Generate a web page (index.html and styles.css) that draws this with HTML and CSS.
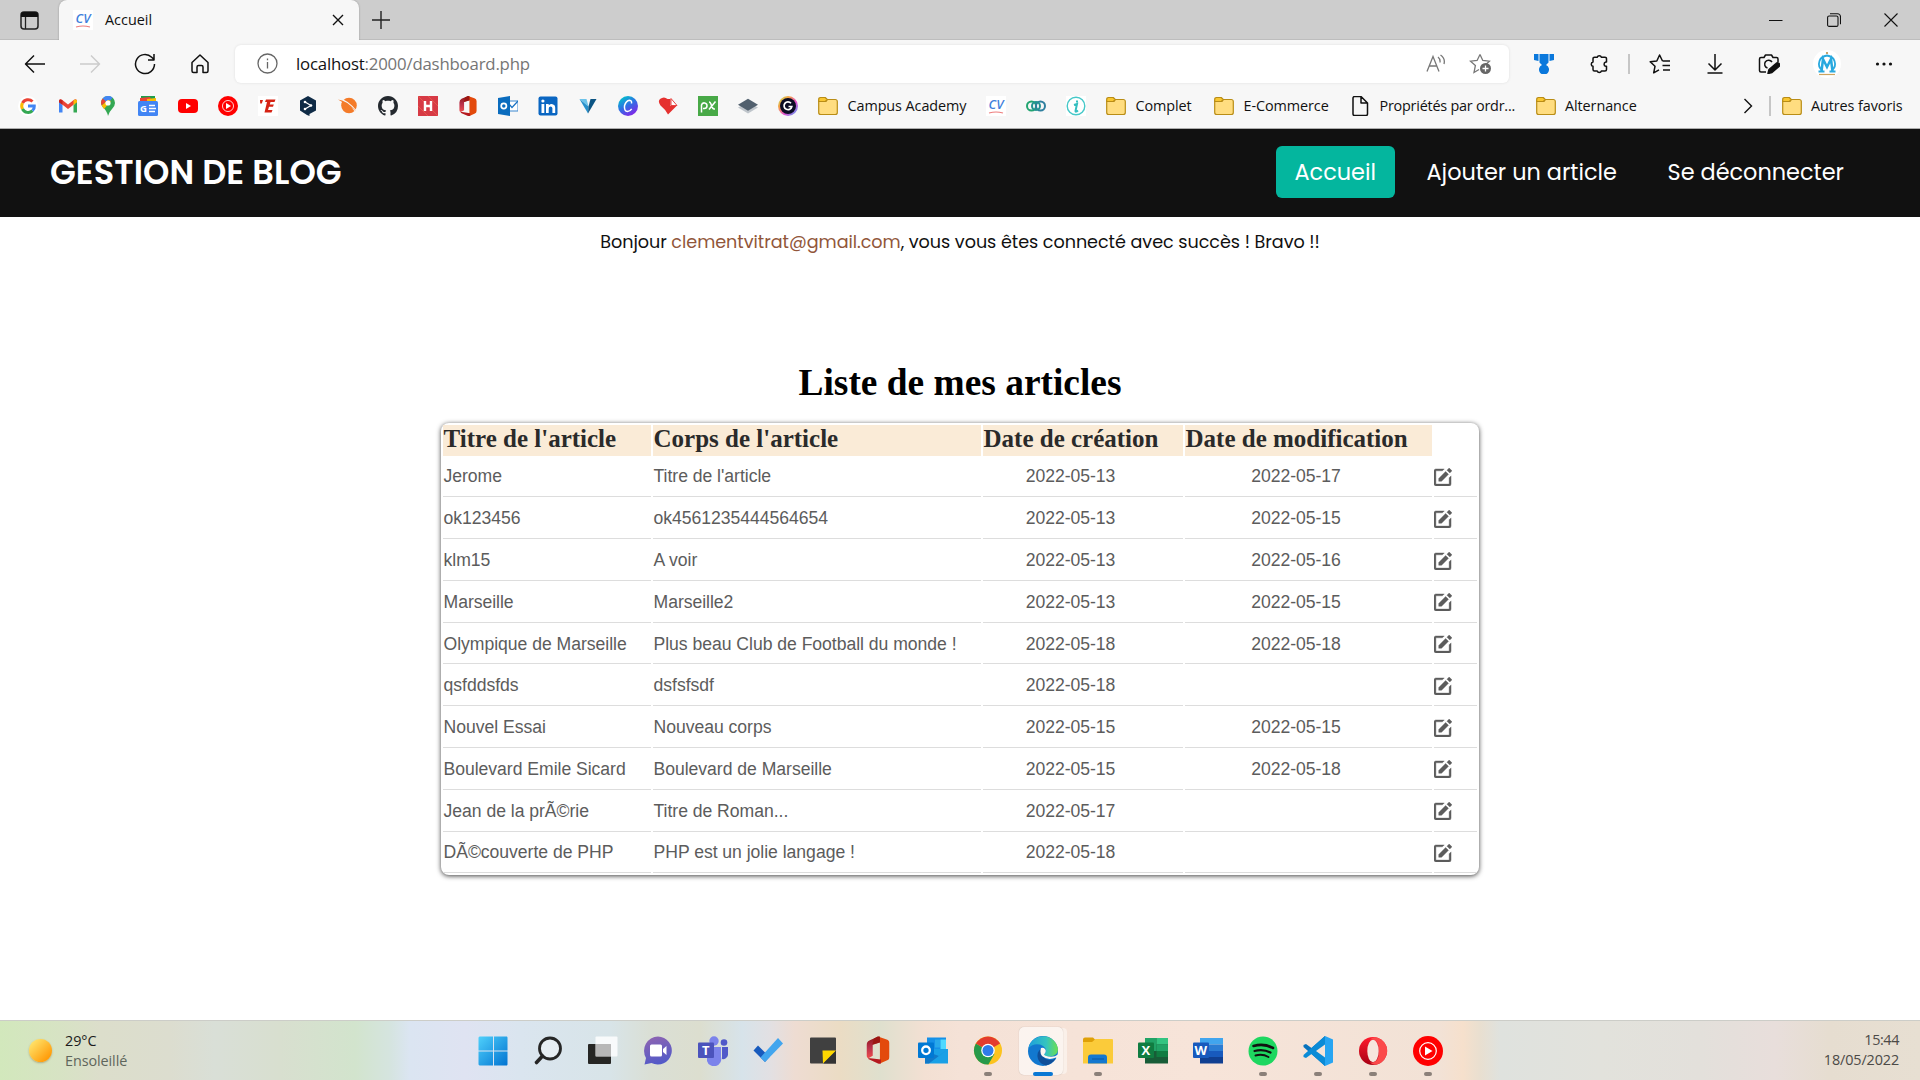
FILE: index.html
```html
<!DOCTYPE html>
<html lang="fr">
<head>
<meta charset="utf-8">
<title>Accueil</title>
<link rel="stylesheet" href="styles.css">
</head>
<body>
<svg class="defs" aria-hidden="true">
  <defs>
    <symbol id="edit" viewBox="3 2 19 19"><path d="m18.988 2.012 3 3L19.701 7.3l-3-3zM8 16h3l7.287-7.287-3-3L8 13z"/><path d="M19 19H8.158c-.026 0-.053.01-.079.01-.033 0-.066-.009-.1-.01H5V5h6.847l2-2H5c-1.103 0-2 .896-2 2v14c0 1.104.897 2 2 2h14a2 2 0 0 0 2-2v-8.668l-2 2V19z"/></symbol>
    <symbol id="folder" viewBox="0 0 20 20"><path d="M.7 5V16.500a2 2 0 0 0 2 2h14.600a2 2 0 0 0 2-2V5.500a2 2 0 0 0-2-2H9.300L8 5.300z" fill="#ffdd80" stroke="#b98d16" stroke-width="1.200"/><path d="M.7 5.500V3.200A1.700 1.700 0 0 1 2.400 1.500h4.800L9.300 3.500 7.300 5.500z" fill="#f8c631" stroke="#b98d16" stroke-width="1.200" stroke-linejoin="round"/></symbol>
    <symbol id="cv" viewBox="0 0 20 20"><rect width="20" height="20" fill="#fff"/><text x="2.500" y="12.500" font-family="Open Sans, sans-serif" font-size="12.500" font-style="italic" font-weight="600" textLength="15" lengthAdjust="spacingAndGlyphs" fill="#3f7fdc">CV</text><path d="M3 17q7-2 14 0" fill="none" stroke="#ee7d7d" stroke-width="1.200"/></symbol>
    <symbol id="ytmusic" viewBox="0 0 30 30"><circle cx="15" cy="15" r="15" fill="#f00"/><circle cx="15" cy="15" r="8.300" fill="none" stroke="#fff" stroke-width="1.200"/><path d="m12 10.500 7.500 4.500-7.500 4.500z" fill="#fff"/></symbol>
    <linearGradient id="officeRed" x1="0" y1="0" x2="0" y2="1"><stop offset="0" stop-color="#8e1515"/><stop offset=".5" stop-color="#b9304a"/><stop offset="1" stop-color="#ee4d4d"/></linearGradient>
    <symbol id="office" viewBox="0 0 24 28"><path d="M12 0 3 4Q0 5.500 0 9v11q0 2 2 2.500l4.500-2.500V8.500L15 6z" fill="url(#officeRed)"/><path d="m12 0 9 3q3 1 3 4v14q0 3-3 4l-7 3V6z" fill="#e34a0c"/><path d="M14 6V0h-2L8 2 6 8.500z" fill="#9b1612"/><path d="M4 22.500 15 24v4q-1.500.500-3 0L3 24q-2-.8-1-1.500z" fill="#b5191f"/></symbol>
  </defs>
</svg>

<header class="browser">
  <div class="tabstrip">
    <div class="tabactions"><svg width="19" height="19" viewBox="0 0 19 19"><rect x="1" y="1" width="17" height="17" rx="3" fill="none" stroke="#222" stroke-width="1.500"/><path d="M1 6V4a3 3 0 0 1 3-3h11a3 3 0 0 1 3 3v2z" fill="#111"/><path d="M5.500 6v12" stroke="#222" stroke-width="1.300"/></svg></div>
    <div class="tab">
      <svg width="20" height="20"><use href="#cv"/></svg>
      <span class="tabtitle">Accueil</span>
      <svg class="tabclose" width="12" height="12" viewBox="0 0 12 12"><path d="m1 1 10 10M11 1 1 11" stroke="#111" stroke-width="1.400"/></svg>
    </div>
    <svg class="newtab" width="18" height="18" viewBox="0 0 18 18"><path d="M9 0v18M0 9h18" stroke="#222" stroke-width="1.400"/></svg>
    <div class="winbtns">
      <svg width="14" height="14" viewBox="0 0 14 14"><path d="M0 7.500h13.500" stroke="#111"/></svg>
      <svg width="14" height="14" viewBox="0 0 14 14"><rect x=".6" y="3" width="10.400" height="10.400" rx="1.500" fill="none" stroke="#111" stroke-width="1.100"/><path d="M3 .8h7.500a3 3 0 0 1 3 3v7.500" fill="none" stroke="#111" stroke-width="1.100"/></svg>
      <svg width="14" height="14" viewBox="0 0 14 14"><path d="m.5.500 13 13M13.500.500l-13 13" stroke="#111" stroke-width="1.100"/></svg>
    </div>
  </div>

  <div class="toolbar">
    <div class="navbtns">
      <svg width="22" height="20" viewBox="0 0 22 20" class="ln"><path d="M21 10H1.500M10 1.500 1.500 10l8.500 8.500"/></svg>
      <svg width="22" height="20" viewBox="0 0 22 20" class="ln off"><path d="M1 10h19.500M12 1.500l8.500 8.500-8.500 8.500"/></svg>
      <svg width="22" height="22" viewBox="0 0 22 22" class="ln"><path d="M20.500 11A9.500 9.500 0 1 1 17.700 4.300L20 6.500M20 1v6h-6"/></svg>
      <svg width="20" height="20" viewBox="0 0 20 20" class="ln"><path d="M2 8.500 10 1l8 7.500V17a1.500 1.500 0 0 1-1.500 1.500H13V13a1.500 1.500 0 0 0-1.500-1.500h-3A1.500 1.500 0 0 0 7 13v5.500H3.500A1.500 1.500 0 0 1 2 17z"/></svg>
    </div>
    <div class="urlbar">
      <svg width="21" height="21" viewBox="0 0 21 21" fill="none" stroke="#666" stroke-width="1.300"><circle cx="10.500" cy="10.500" r="9.500"/><path d="M10.500 9v6.500M10.500 5.500v1.700"/></svg>
      <span class="url">localhost<i>:2000/dashboard.php</i></span>
      <svg class="read" width="20" height="19" viewBox="0 0 20 19" fill="none" stroke="#777" stroke-width="1.300"><path d="m1 17.500 6-15 6 15M3 12h8M12 3q2.500 2 2 5.500M14.500 1q5 3.500 3.500 9"/></svg>
      <svg width="23" height="22" viewBox="0 0 23 22" fill="none" stroke="#777" stroke-width="1.300"><path d="m11 1.500 2.800 6 6.600.7-4.900 4.500M10 16.500l-5 3 1.400-7L1.500 8.200l6.600-.7L11 1.500"/><circle cx="16.500" cy="15.500" r="5.500" fill="#666" stroke="none"/><path d="M16.500 12.500v6M13.500 15.500h6" stroke="#fff"/></svg>
    </div>
    <div class="tools">
      <svg width="20" height="20" viewBox="0 0 20 20" fill="#0a78dc"><path d="M0 0h4.500v7L0 6zM15.500 0H20v6l-4.500 1zM5.500 0h9v8.500L12 11a5 5 0 1 1-4 0L5.500 8.500z"/></svg>
      <svg width="20" height="20" viewBox="0 0 20 20" class="ln"><path d="M6 3.200h2.200a2.200 2.200 0 0 1 4.200 0H16a1.500 1.500 0 0 1 1.500 1.500V8h-.7a2.200 2.200 0 0 0 0 4.300h.7v3.200A1.500 1.500 0 0 1 16 17h-3.600a2.200 2.200 0 0 1-4.200 0H5.500A1.500 1.500 0 0 1 4 15.500v-3.200a2.200 2.200 0 0 1 0-4.300V4.700A1.500 1.500 0 0 1 5.500 3.200z"/></svg>
      <span class="sep"></span>
      <svg width="22" height="20" viewBox="0 0 22 20" class="ln"><path d="M13.500 7 10.600 1 7.800 7 1.200 7.800 6 12.300l-1.300 6.500 5.300-3M13.500 7H21M13.500 11.500H21M14 16h7"/></svg>
      <svg width="18" height="20" viewBox="0 0 18 20" class="ln"><path d="M9 0v16M2.500 9.500 9 16l6.500-6.500M1.500 19h15"/></svg>
      <svg width="22" height="20" viewBox="0 0 22 20" class="ln"><path d="M20 8V5a1.500 1.500 0 0 0-1.500-1.500H15L13.500 1h-6L6 3.500H3A1.500 1.500 0 0 0 1.500 5v11.500A1.500 1.500 0 0 0 3 18h5M14 8a4 4 0 1 0-4.500 6"/><path d="m10 19.500 1-4 7-6a2 2 0 0 1 3 3l-7 6z" fill="#111"/></svg>
      <svg class="avatar" width="28" height="28" viewBox="0 0 28 28"><circle cx="14" cy="14" r="14" fill="#fff"/><circle cx="14" cy="3" r="1.100" fill="#ba8c4b"/><g fill="none" stroke="#29a9df"><path d="M8.500 21.500 10 9l4 8 4-8 1.500 12.500" stroke-width="2.500"/><path d="M9.500 20.500Q4.500 17 6.500 11 8 6.500 14 5.500q6 1 7.500 5.500 2 6-3 9.500" stroke-width="1.800"/><path d="M5.500 21.500h6M16.500 21.500h6" stroke-width="2"/></g><path d="M6 24.500h16" stroke="#cda45e" stroke-width="1.200"/></svg>
      <svg width="18" height="6" viewBox="0 0 18 6" fill="#111"><circle cx="2.500" cy="3" r="1.600"/><circle cx="9" cy="3" r="1.600"/><circle cx="15.500" cy="3" r="1.600"/></svg>
    </div>
  </div>

  <div class="bookmarks">
    <svg width="20" height="20" viewBox="0 0 20 20"><circle cx="10" cy="10" r="10" fill="#fff"/><g fill="none" stroke-width="3"><path d="M14.500 5.500A6.300 6.300 0 0 0 4.500 7" stroke="#ea4335"/><path d="M4.500 7a6.300 6.300 0 0 0 0 6" stroke="#fbbc05"/><path d="M4.500 13a6.300 6.300 0 0 0 10 1.700" stroke="#34a853"/><path d="M14.500 14.700Q16.500 13 16.300 10H10" stroke="#4285f4"/></g></svg>
    <svg width="20" height="20" viewBox="0 0 20 20"><path d="M1 4.500V16.500h3.500v-7z" fill="#4285f4"/><path d="M19 4.500v12h-3.500v-7z" fill="#34a853"/><path d="M1 6V4.500Q2 2.500 4 3.800L10 8.500l6-4.700Q18 2.500 19 4.500V6l-9 7z" fill="#ea4335"/><path d="M15.500 4.200V9L19 6.300V5Q18.500 2.500 15.500 4.200z" fill="#fbbc04"/><path d="M4.500 4.200V9L1 6.300V5Q1.500 2.500 4.500 4.200z" fill="#c5221f"/></svg>
    <svg width="20" height="20" viewBox="0 0 20 20"><path d="M10 20Q9 15 5 11.500 3 9 3 7a7 7 0 0 1 14 0q0 3-3 6t-4 7z" fill="#34a853"/><path d="M4.500 2.700 10 8l4.500-6.500A7 7 0 0 0 4.500 2.700z" fill="#4285f4"/><path d="M4.500 2.500A7 7 0 0 0 3.700 9.500L8 5.500z" fill="#ea4335"/><path d="M3.700 9.500 6 13l7-8-3-1z" fill="#fbbc04"/><circle cx="10" cy="7" r="2.600" fill="#fff"/></svg>
    <svg width="20" height="20" viewBox="0 0 20 20"><path d="M3 0h14v6H3z" fill="#1e9e4b"/><path d="m2 2 10-1 3 6H2z" fill="#ea4335"/><path d="m9 3 9-1v6H9z" fill="#fbbc04"/><rect y="5" width="20" height="15" rx="1.500" fill="#4285f4"/><text x="2" y="16" font-family="Open Sans" font-size="9.500" font-weight="700" fill="#fff">G</text><path d="M11 9.500h6M11 12.500h7M11 15.500h6" stroke="#fff" stroke-width="1.500"/></svg>
    <svg width="20" height="20" viewBox="0 0 20 20"><rect y="3" width="20" height="14" rx="4" fill="#f00"/><path d="m8 7 5 3-5 3z" fill="#fff"/></svg>
    <svg width="20" height="20"><use href="#ytmusic"/></svg>
    <svg width="20" height="20" viewBox="0 0 20 20"><rect width="20" height="20" fill="#fff"/><path d="M2 4h3L3.800 7.500H2.200zM8 3.500h9.500L16.500 6h-4l-.7 2.500h4l-.8 2.300h-4L10 14h4.500l-1 2.500H6.500L9 6H7z" fill="#d62213"/></svg>
    <svg width="20" height="20" viewBox="0 0 20 20"><path d="m10 0 8 4.500v10L11.500 18v2L9 19 2 14.500v-10z" fill="#0f2b46"/><path d="m7 6 6 3.500-6 3.500" fill="none" stroke="#fff" stroke-width="1.200"/><g fill="#fff"><circle cx="7" cy="6" r="1.300"/><circle cx="13" cy="9.500" r="1.300"/><circle cx="7" cy="13" r="1.300"/></g></svg>
    <svg width="20" height="20" viewBox="0 0 20 20"><circle cx="11" cy="9.500" r="7.800" fill="#f47b29"/><path d="M0 3q9 1 19 13.500" fill="none" stroke="#f7f7f7" stroke-width="2"/><path d="M0 3.500Q8 4 18 15 8 8 0 3.500z" fill="#f47b29"/></svg>
    <svg width="20" height="20" viewBox="0 0 16 16" fill="#24292f"><path d="M8 0C3.580 0 0 3.580 0 8c0 3.540 2.290 6.530 5.470 7.590.4.070.55-.17.55-.38 0-.19-.01-.82-.01-1.490-2.010.37-2.530-.49-2.690-.94-.09-.23-.48-.94-.82-1.130-.28-.15-.68-.52-.01-.53.63-.01 1.080.58 1.230.82.72 1.210 1.870.87 2.330.66.07-.52.280-.87.510-1.070-1.780-.2-3.640-.89-3.640-3.950 0-.87.310-1.590.82-2.150-.08-.2-.36-1.020.08-2.120 0 0 .67-.21 2.200.82.640-.18 1.320-.27 2-.27s1.360.09 2 .27c1.530-1.040 2.200-.82 2.200-.82.440 1.100.16 1.920.08 2.120.51.56.82 1.270.82 2.150 0 3.070-1.870 3.750-3.650 3.950.29.25.54.73.54 1.480 0 1.070-.01 1.930-.01 2.200 0 .21.15.46.55.38A8.010 8.010 0 0 0 16 8c0-4.420-3.580-8-8-8z"/></svg>
    <svg width="20" height="20" viewBox="0 0 20 20"><rect width="20" height="20" fill="#d73a45"/><path d="m0 10 10 10M0 0l20 20M10 0l10 10" stroke="#e4574b"/><path d="M7 5v10M13 5v10M7 10h6" stroke="#fff" stroke-width="2.400"/></svg>
    <svg width="20" height="20"><use href="#office"/></svg>
    <svg width="20" height="20" viewBox="0 0 20 20"><path d="M9 5h11v10H9z" fill="#fff" stroke="#3a87cf"/><path d="m11 8 3 3.500L20 5" fill="none" stroke="#1a73c4" stroke-width="1.200"/><path d="m0 2 12-2v20L0 18z" fill="#0a6cbe"/><circle cx="5.800" cy="10" r="2.600" fill="none" stroke="#fff" stroke-width="1.700"/></svg>
    <svg width="20" height="20" viewBox="0 0 20 20"><rect x=".5" y=".5" width="19" height="19" rx="2" fill="#0a66c2"/><path d="M3.500 8h2.800v9H3.500zM8 8h2.700v1.200q3.200-2.700 6 .3.500 1 .5 2.500v5h-2.800v-5q-.8-2.500-3.200-1-.5 1-.5 2v4H8z" fill="#fff"/><circle cx="4.900" cy="5" r="1.600" fill="#fff"/></svg>
    <svg width="20" height="20" viewBox="0 0 20 20"><path d="M1.500 3h7l2 7.500z" fill="#6cc3ea"/><path d="M1.500 3 10 17.500l.500-7z" fill="#2790cb"/><path d="M18.500 3h-6l-2 7.500-.5 7z" fill="#0b5483"/></svg>
    <svg width="20" height="20" viewBox="0 0 20 20"><defs><linearGradient id="canva" x1="0" y1="0" x2=".6" y2="1"><stop offset=".1" stop-color="#00c4cc"/><stop offset=".55" stop-color="#2f6fe4"/><stop offset="1" stop-color="#7d2ae8"/></linearGradient></defs><circle cx="10" cy="10" r="10" fill="url(#canva)"/><path d="M13.500 7.500q.5-3-2-3.200-3.500.5-5 5.500-.5 5.500 3 5.700 2.500-.2 4.200-2.700" fill="none" stroke="#fff" stroke-width="1.500"/></svg>
    <svg width="20" height="20" viewBox="0 0 20 20"><path d="M10 18.500Q8 14 2.500 9.500-.5 5.500 2 3 6-.2 9.500 3l3 0v7h6L15 13.500z" fill="#e5312f"/><path d="m13 2.500 6 7h-6z" fill="#fff" stroke="#e5312f" stroke-width=".9"/></svg>
    <svg width="20" height="20" viewBox="0 0 20 20"><rect width="20" height="20" fill="#48a947"/><path d="M3.500 16.500V9a2.800 2.800 0 1 1 2.800 3.500H5M11 6q1.500 0 2.500 3.500T16 13h1M17.500 5.500 11 13.500" fill="none" stroke="#fff" stroke-width="1.500"/></svg>
    <svg width="20" height="20" viewBox="0 0 20 20"><path d="m0 11.500 10-5 10 5-10 6z" fill="#bfc5cb"/><path d="m0 8.800 10-6 10 6-10 6z" fill="#51606e"/></svg>
    <svg width="20" height="20" viewBox="0 0 20 20"><defs><linearGradient id="ring" x1="0" y1="0" x2="1" y2="1"><stop offset="0" stop-color="#b9ea63"/><stop offset=".3" stop-color="#f5a046"/><stop offset=".6" stop-color="#e54fcf"/><stop offset="1" stop-color="#3fa8f6"/></linearGradient></defs><circle cx="10" cy="10" r="10" fill="url(#ring)"/><circle cx="10" cy="10" r="8" fill="#0a0c24"/><path d="M13 7.300A3.900 3.900 0 1 0 13.800 10.500H10.500" fill="none" stroke="#fff" stroke-width="1.700"/></svg>
    <div class="bm"><svg width="20" height="20"><use href="#folder"/></svg><span class="w118">Campus Academy</span></div>
    <svg width="20" height="20"><use href="#cv"/></svg>
    <svg width="20" height="20" viewBox="0 0 20 20" fill="none" stroke-width="2"><rect x="1" y="5.500" width="9" height="9" rx="4.500" stroke="#23a571"/><rect x="10" y="5.500" width="9" height="9" rx="4.500" stroke="#2f7f9f"/><circle cx="10" cy="10" r="4" stroke="#239391"/></svg>
    <svg width="20" height="20" viewBox="0 0 20 20"><rect width="20" height="20" fill="#fff"/><circle cx="10" cy="10" r="8.800" fill="none" stroke="#45c8c8" stroke-width="1.400"/><path d="M11 4.500v2M8 9l3-1-1.500 7q0 1.500 2.500-.5" fill="none" stroke="#35bfc0" stroke-width="2"/></svg>
    <div class="bm"><svg width="20" height="20"><use href="#folder"/></svg><span class="w58">Complet</span></div>
    <div class="bm"><svg width="20" height="20"><use href="#folder"/></svg><span class="w86">E-Commerce</span></div>
    <div class="bm"><svg width="20" height="20" viewBox="0 0 20 20" class="ln"><path d="M3 2a1.500 1.500 0 0 1 1.500-1.500H11L17.500 7v11a1.500 1.500 0 0 1-1.500 1.500H4.500A1.500 1.500 0 0 1 3 18zM11 .5V7h6.500"/></svg><span class="w136">Propriétés par ordr...</span></div>
    <div class="bm"><svg width="20" height="20"><use href="#folder"/></svg><span class="w71">Alternance</span></div>
    <svg class="more" width="10" height="16" viewBox="0 0 10 16"><path d="m1.500 1 7 7-7 7" fill="none" stroke="#111" stroke-width="1.400"/></svg>
    <span class="sep"></span>
    <div class="bm other"><svg width="20" height="20"><use href="#folder"/></svg><span class="w91">Autres favoris</span></div>
  </div>
</header>

<main class="page">
  <nav class="sitenav">
    <div class="brand">GESTION DE BLOG</div>
    <div class="links"><a class="current">Accueil</a><a class="add">Ajouter un article</a><a class="logout">Se déconnecter</a></div>
  </nav>
  <p class="hello">Bonjour <span>clementvitrat@gmail.com</span>, vous vous êtes connecté avec succès ! Bravo !!</p>
  <h1>Liste de mes articles</h1>
  <table>
    <colgroup><col class="c1"><col class="c2"><col class="c3"><col class="c4"><col class="c5"></colgroup>
    <thead><tr><th>Titre de l'article</th><th>Corps de l'article</th><th>Date de création</th><th>Date de modification</th></tr></thead>
    <tbody>
      <tr><td>Jerome</td><td>Titre de l'article</td><td>2022-05-13</td><td>2022-05-17</td><td><svg class="edit"><use href="#edit"/></svg></td></tr>
      <tr><td>ok123456</td><td>ok4561235444564654</td><td>2022-05-13</td><td>2022-05-15</td><td><svg class="edit"><use href="#edit"/></svg></td></tr>
      <tr><td>klm15</td><td>A voir</td><td>2022-05-13</td><td>2022-05-16</td><td><svg class="edit"><use href="#edit"/></svg></td></tr>
      <tr><td>Marseille</td><td>Marseille2</td><td>2022-05-13</td><td>2022-05-15</td><td><svg class="edit"><use href="#edit"/></svg></td></tr>
      <tr><td>Olympique de Marseille</td><td>Plus beau Club de Football du monde !</td><td>2022-05-18</td><td>2022-05-18</td><td><svg class="edit"><use href="#edit"/></svg></td></tr>
      <tr><td>qsfddsfds</td><td>dsfsfsdf</td><td>2022-05-18</td><td></td><td><svg class="edit"><use href="#edit"/></svg></td></tr>
      <tr><td>Nouvel Essai</td><td>Nouveau corps</td><td>2022-05-15</td><td>2022-05-15</td><td><svg class="edit"><use href="#edit"/></svg></td></tr>
      <tr><td>Boulevard Emile Sicard</td><td>Boulevard de Marseille</td><td>2022-05-15</td><td>2022-05-18</td><td><svg class="edit"><use href="#edit"/></svg></td></tr>
      <tr><td>Jean de la prÃ©rie</td><td>Titre de Roman...</td><td>2022-05-17</td><td></td><td><svg class="edit"><use href="#edit"/></svg></td></tr>
      <tr><td>DÃ©couverte de PHP</td><td>PHP est un jolie langage !</td><td>2022-05-18</td><td></td><td><svg class="edit"><use href="#edit"/></svg></td></tr>
    </tbody>
  </table>
</main>

<footer class="taskbar">
  <div class="weather"><span class="sun"></span><div><b>29°C</b><span>Ensoleillé</span></div></div>
  <div class="apps">
    <div class="app"><svg viewBox="0 0 30 30"><defs><linearGradient id="win" x1="0" y1="0" x2="1" y2="1"><stop stop-color="#4fd0fb"/><stop offset="1" stop-color="#0173d1"/></linearGradient></defs><path d="M1.500.500H15V14.500H.5V1.500zM16 .5h13l.5 1v13H16zM.5 15.500H15v14H1.500l-1-1zM16 15.500h13.500v13l-.5 1H16z" fill="url(#win)"/></svg></div>
    <div class="app"><svg viewBox="0 0 30 30"><circle cx="17" cy="12.500" r="10.500" fill="#fff" fill-opacity=".35" stroke="#262626" stroke-width="2.800"/><path d="M9.500 20 3.500 26.500" stroke="#262626" stroke-width="3.600" stroke-linecap="round"/></svg></div>
    <div class="app"><svg viewBox="0 0 30 30"><rect x="0" y="8" width="23" height="20" rx="1" fill="#262624"/><rect x="7.500" y=".5" width="22" height="20" rx="1" fill="#fff" fill-opacity=".82"/><rect x="7.500" y="8" width="15.500" height="12.500" fill="#aaa" fill-opacity=".7"/></svg></div>
    <div class="app"><svg viewBox="0 0 30 30"><defs><linearGradient id="chat" x1=".3" y1="0" x2=".6" y2="1"><stop stop-color="#8d64b2"/><stop offset="1" stop-color="#5059c9"/></linearGradient></defs><path d="M15 .5A14 14 0 1 1 8.500 27L1.500 28.500 3 22A14.300 14.300 0 0 1 15 .5z" fill="url(#chat)"/><rect x="7" y="8.500" width="12" height="12" rx="1.500" fill="#fff"/><path d="m20 13 3.500-3v9L20 16z" fill="#fff"/></svg></div>
    <div class="app"><svg viewBox="0 0 30 30"><circle cx="16" cy="5" r="4.700" fill="#7b83eb"/><circle cx="26" cy="6.500" r="3.300" fill="#5059c9"/><path d="M9 11h14v10a7 7 0 0 1-14 4z" fill="#7b83eb"/><path d="M24 11h6v8a5 5 0 0 1-6 4z" fill="#5059c9"/><rect y="6.500" width="16" height="15.500" rx="1" fill="#4b53bc"/><text x="4" y="19" font-family="Open Sans" font-weight="700" font-size="13" fill="#fff">T</text></svg></div>
    <div class="app"><svg viewBox="0 0 30 30"><path d="M5 9.500 16.500 21 12 26 .5 14.500z" fill="#185abd"/><path d="M7.500 21.500 25 2l5 5.500L12 26z" fill="#41a5ee"/></svg></div>
    <div class="app"><svg viewBox="0 0 30 30"><path d="M3 1.500h24a1 1 0 0 1 1 1v25H3a1 1 0 0 1-1-1v-24a1 1 0 0 1 1-1z" fill="#404040"/><path d="M14.500 14.500H28L15 27.500z" fill="#ffd800"/><path d="m28 15-12.500 12.500H28z" fill="#333"/></svg></div>
    <div class="app"><svg viewBox="0 0 30 30"><use href="#office" x="3.500" y="0" width="23" height="28"/></svg></div>
    <div class="app"><svg viewBox="0 0 30 30"><path d="M9 1.500h19v14H9z" fill="#1590e8"/><path d="M17 3.500h5.500v8H17z" fill="#28a8ea"/><path d="M22.500 3.500H28V13h-5.500z" fill="#50d9ff"/><path d="M7 13h23v14.500H7z" fill="#1aa0e6"/><path d="m30 13-9 7-14-5v12.500h4z" fill="#1179c9"/><rect y="6.500" width="16" height="15.500" rx="1" fill="#0078d4"/><circle cx="8" cy="14.300" r="3.800" fill="none" stroke="#fff" stroke-width="2.300"/></svg></div>
    <div class="app run"><svg viewBox="0 0 30 30"><circle cx="15" cy="14.500" r="14" fill="#fcc31e"/><path d="M15 14.500 2.900 7.500a14 14 0 0 0 12.500 21l6-10.500z" fill="#27994a"/><path d="M15 14.500 2.900 7.500a14 14 0 0 1 24.200 0z" fill="#e33b2e"/><circle cx="15" cy="14.500" r="6.800" fill="#fff"/><circle cx="15" cy="14.500" r="5.500" fill="#2f7bea"/></svg></div>
    <div class="app run active"><svg viewBox="0 0 30 30"><defs><linearGradient id="edgeTop"><stop stop-color="#1d9fdc"/><stop offset=".6" stop-color="#35c3c0"/><stop offset="1" stop-color="#6be04f"/></linearGradient></defs><circle cx="15" cy="15" r="15" fill="#1278cf"/><path d="M.5 12A15 15 0 0 1 30 13q0 7-8 7.500-5 0-6-2 2.500-2 2-4.500-1-4-6-5.500Q5 7 .5 12z" fill="url(#edgeTop)"/><path d="M13 13q-5 3-3 10 2 5 8 6.500 6-1.500 10-7-3 1.500-7 1.500-9-2-8-11z" fill="#104f99"/><path d="M13 12q-1.500 5 1 8 6 5 14 1.500l2.500 1.500V18q-3 3-8 2.800-5-.3-6.500-2.300 3-3 1-5.500-1.500-2-4-1z" fill="#fdf6f0"/></svg></div>
    <div class="app run"><svg viewBox="0 0 30 30"><path d="M0 3.500a2 2 0 0 1 2-2h8L12.500 4v5H0z" fill="#dfa008"/><path d="M0 6h9l3.500-3H29a1 1 0 0 1 1 1v23.500H0z" fill="#fbcb3a"/><path d="M5 27.500v-6a3 3 0 0 1 3-3h13a3 3 0 0 1 3 3v6z" fill="#1478cf"/><path d="M9 23h12" stroke="#0b569f"/></svg></div>
    <div class="app"><svg viewBox="0 0 30 30"><path d="M7 2h23v25.500H7z" fill="#185c37"/><path d="M7 2h11.500v13H7z" fill="#21a366"/><path d="M18.500 2H30v6.500H18.500z" fill="#33c481"/><path d="M18.500 8.500H30V15H18.500z" fill="#21a366"/><path d="M18.500 15H30v6H18.500z" fill="#107c41"/><rect y="6.500" width="16" height="15.500" rx="1" fill="#107c41"/><text x="3.500" y="19" font-family="Open Sans" font-weight="700" font-size="13" fill="#fff">X</text></svg></div>
    <div class="app"><svg viewBox="0 0 30 30"><path d="M7 2h23v6.500H7z" fill="#41a5ee"/><path d="M7 8.500h23V15H7z" fill="#2b7cd3"/><path d="M7 15h23v6H7z" fill="#185abd"/><path d="M7 21h23v6.500H7z" fill="#103f91"/><rect y="6.500" width="16" height="15.500" rx="1" fill="#185abd"/><text x="1.500" y="19" font-family="Open Sans" font-weight="700" font-size="13" fill="#fff">W</text></svg></div>
    <div class="app run"><svg viewBox="0 0 30 30"><circle cx="15" cy="15" r="14.500" fill="#1ed760"/><path d="M5.500 10q10.500-3 19.500 2" fill="none" stroke="#111" stroke-width="2.600" stroke-linecap="round"/><path d="M6.500 15q8.500-2.500 16 1.500" fill="none" stroke="#111" stroke-width="2.200" stroke-linecap="round"/><path d="M7.500 19.500q7-2 13 1.500" fill="none" stroke="#111" stroke-width="1.900" stroke-linecap="round"/></svg></div>
    <div class="app run"><svg viewBox="0 0 30 30"><path d="M22 0 8.500 12 3 8 .5 9v2L22 30z" fill="#0672bd"/><path d="M22 30 8.500 18 3 22 .5 21v-2L22 0z" fill="#0b8bd6"/><path d="m22 0 8 3.500v23L22 30z" fill="#27a5f2"/><path d="m22 8.500-9 6.500 9 6.500z" fill="#f5e4d9"/></svg></div>
    <div class="app run"><svg viewBox="0 0 30 30"><defs><linearGradient id="opera" x1="0" y1="0" x2="0" y2="1"><stop stop-color="#ff1b2d"/><stop offset="1" stop-color="#a70014"/></linearGradient></defs><circle cx="15" cy="15" r="14" fill="url(#opera)"/><path d="M19 1.500a14 14 0 0 1 0 27q-4 1-7-2h3q6-1 6-11.500T15 3.500h-3q3-3 7-2z" fill="#fb4a4a"/><ellipse cx="15" cy="15" rx="5.700" ry="11.300" fill="#f6e6dc"/></svg></div>
    <div class="app run"><svg viewBox="0 0 30 30"><use href="#ytmusic" width="30" height="30"/></svg></div>
  </div>
  <div class="clock"><span>15:44</span><span>18/05/2022</span></div>
</footer>
</body>
</html>
```
FILE: styles.css
```css
* { box-sizing: border-box; }
body { margin: 0; width: 1920px; height: 1080px; overflow: hidden; background: #fff; display: flex; flex-direction: column; font-family: "Open Sans", sans-serif; }
svg { display: block; flex: none; }
.defs { position: absolute; width: 0; height: 0; }
.ln { fill: none; stroke: #111; stroke-width: 1.5; stroke-linejoin: round; }
.ln.off { stroke: #ccc; }
.sep { width: 2px; height: 20px; background: #c6c6c6; }

/* Browser chrome */
.browser { height: 129px; background: #f7f7f7; border-bottom: 1px solid #adadad; flex: none; }
.tabstrip { height: 40px; background: #cdcdcd; display: flex; align-items: center; box-shadow: inset 0 -1px #bdbdbd; }
.tabactions { width: 59px; height: 40px; display: flex; align-items: center; justify-content: center; }
.tab { width: 300px; height: 40px; background: #f7f7f7; border-radius: 8px 8px 0 0; display: flex; align-items: center; padding: 0 15px 0 14px; box-shadow: 0 0 2px rgba(0,0,0,.3); clip-path: inset(0 -3px); }
.tab > svg:first-child { margin-bottom: 1px; }
.tabtitle { font-size: 14.4px; margin-left: 12px; flex: 1; color: #111; padding-bottom: 2px; }
.newtab { margin-left: 13px; margin-bottom: 1px; }
.winbtns { margin-left: auto; display: flex; gap: 43.5px; padding: 0 22px 1px 0; }
.toolbar { height: 47px; display: flex; align-items: center; }
.navbtns { width: 235px; padding: 0 8px 0 7px; display: grid; grid-template-columns: repeat(4, 55px); justify-items: center; align-items: center; }
.urlbar { width: 1274px; height: 38px; background: #fff; border-radius: 6px; box-shadow: 0 0 3px rgba(0,0,0,.1); display: flex; align-items: center; padding: 0 17px 0 22px; }
.url { font-size: 16.8px; letter-spacing: -.19px; margin-left: 18px; color: #111; padding-bottom: 1px; }
.url i { font-style: normal; color: #757575; }
.read { margin-left: auto; margin-right: 23px; }
.tools { width: 411px; padding-left: 7px; display: grid; grid-template-columns: 55px 56px 4px 58px 52px 56px 60px 54px; justify-items: center; align-items: center; }
.bookmarks { height: 38px; padding: 0 18px; display: flex; align-items: center; gap: 20px; font-size: 14.4px; color: #111; white-space: nowrap; }
.bm { display: flex; align-items: center; gap: 9.5px; }
.bm span { letter-spacing: -.08px; padding-bottom: 1px; }
.w118 { width: 118.5px; }
.w58 { width: 58.5px; }
.w86 { width: 86.5px; }
.w136 { width: 136px; }
.bookmarks .w136 { letter-spacing: -.22px; }
.w71 { width: 71px; }
.w91 { width: 91px; }
.more { margin-left: auto; margin-right: -4px; }
.bookmarks .other { margin-left: -9px; }

/* Blog page */
.page { flex: 1; display: flex; flex-direction: column; align-items: center; }
.sitenav { width: 100%; height: 88px; background: #111; color: #fff; display: flex; align-items: center; justify-content: space-between; padding: 0 59px 2px 50px; font-family: Poppins, Inter, sans-serif; }
.brand { font-size: 33.6px; font-weight: 600; padding-top: 2px; letter-spacing: .05px; }
.links { display: flex; align-items: center; gap: 13px; font-size: 22.4px; }
.links a { height: 52px; line-height: 52px; padding: 0 16px 0 18.5px; border-radius: 6px; white-space: nowrap; }
.links .current { width: 119px; background: #04b69e; }
.links .add { width: 228px; }
.links .logout { width: 212px; }
.hello { margin: 13px 0 0; font: 17.6px/24px Poppins, Inter, sans-serif; letter-spacing: -.04px; color: #111; }
.hello span { color: #91563a; }
h1 { margin: 107px 0 0; font: bold 37.4px/44px "Liberation Serif", serif; color: #000; }
table { width: 1038px; margin-top: 18px; table-layout: fixed; border-spacing: 2px; border-radius: 8px; box-shadow: 0 1px 5px rgba(0,0,0,.75); font: 17.6px "Liberation Sans", sans-serif; color: #5c5c5c; }
.c1 { width: 208px; } .c2 { width: 328px; } .c3 { width: 200px; } .c4 { width: 247px; } .c5 { width: 43px; }
th { height: 31px; padding: 0 0 3px .5px; background: #faebd7; color: #2a2a2a; font: bold 25px/28px "Liberation Serif", serif; text-align: left; white-space: nowrap; }
td { height: 39.78px; padding: 0 0 1px; border-bottom: 1px solid #ddd; white-space: nowrap; letter-spacing: -.03px; }
tbody tr:first-child td { height: 39.4px; }
td:nth-child(-n+2) { padding-left: .5px; }
tbody tr:not(:first-child) td { padding-bottom: 0; }
td:nth-child(3), td:nth-child(4) { text-align: center; padding-right: 25px; }
.edit { width: 18px; height: 18px; fill: #5c5c5c; stroke: #5c5c5c; stroke-width: .4; overflow: visible; }

/* Windows taskbar */
.taskbar { height: 60px; flex: none; border-top: 1px solid #cccdc8; display: grid; grid-template-columns: 465px 990px 1fr; align-items: center; background: linear-gradient(90deg, #d2e8bc 0, #d7e3c4 60px, #dcdecb 100px, #dcddcf 170px, #d9dfd7 215px, #d8dfcf 280px, #d2e4cd 355px, #d5e4df 390px, #dbe5f2 410px, #dfe3f2 465px, #dae5ef 520px, #d8e4e8 610px, #dadfd5 650px, #dcdecf 700px, #d7e3ea 742px, #e2e0e3 770px, #eedcd2 795px, #ebdcc4 840px, #dfe0ce 880px, #f3e0d3 925px, #f5e2d7 960px, #f7e4d9 1200px, #f2e2d6 1440px, #f6e0cc 1463px, #e9dfd0 1480px, #dfe2de 1500px, #e2e2dc 1600px, #e3e0db 1700px, #e8dedb 1775px, #e6ddd0 1830px, #e7dfd2 1920px); }
.weather { display: flex; align-items: center; padding-left: 29px; gap: 13px; font-size: 14.4px; line-height: 20px; }
.sun { width: 23px; height: 23px; border-radius: 50%; background: linear-gradient(135deg, #ffe066 15%, #ff9500 90%); box-shadow: 0 1px 2px rgba(120,90,30,.4); }
.weather div { display: flex; flex-direction: column; letter-spacing: -.08px; }
.weather b { font-weight: 400; color: #1c1c1c; }
.weather div span { color: #5f665c; }
.apps { display: grid; grid-template-columns: repeat(18, 55px); }
.app { position: relative; height: 58px; display: grid; place-items: center; }
.app svg { width: 30px; height: 30px; position: relative; }
.run::after { content: ""; position: absolute; left: 23.5px; bottom: 4px; width: 8px; height: 4px; border-radius: 2px; background: #8b8079; }
.active::before { content: ""; position: absolute; left: 4px; top: 5px; width: 44px; height: 48px; border-radius: 5px; background: rgba(255,255,255,.6); box-shadow: 0 0 1px rgba(0,0,0,.3), 5px 0 0 -1px rgba(255,255,255,.45); }
.active::after { left: 17.5px; width: 20px; background: #0a78d4; }
.clock { display: flex; flex-direction: column; align-items: flex-end; padding: 0 21px 2px 0; font-size: 14.4px; line-height: 20px; color: #4c4a47; letter-spacing: -.12px; }
.clock span:first-child { letter-spacing: -.4px; }
```
